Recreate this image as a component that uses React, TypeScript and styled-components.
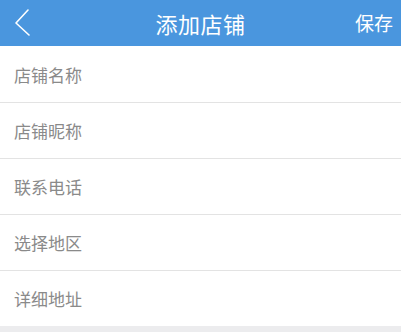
import styled, { createGlobalStyle } from "styled-components";

const GlobalStyle = createGlobalStyle`
  html, body {
    margin: 0;
    padding: 0;
    background: #ececee;
    font-family: "Noto Sans CJK SC", "Noto Sans", sans-serif;
  }
`;

const Page = styled.div`
  width: 401px;
  min-height: 332px;
  background: #ececee;
`;

const NavBar = styled.header`
  height: 46px;
  background: #4a96de;
  display: grid;
  grid-template-columns: 60px 1fr 60px;
  align-items: center;
  color: #fff;
`;

const BackButton = styled.button`
  border: none;
  background: none;
  padding: 0 0 0 14px;
  height: 46px;
  display: flex;
  align-items: center;
  cursor: pointer;
`;

const Title = styled.h1`
  margin: 0;
  text-align: center;
  font-size: 22px;
  font-weight: 400;
  letter-spacing: 0.5px;
  line-height: 46px;
`;

const SaveButton = styled.button`
  border: none;
  background: none;
  color: #fff;
  font-family: inherit;
  font-size: 19px;
  padding: 0 8px 0 0;
  text-align: right;
  line-height: 46px;
  cursor: pointer;
`;

const FieldList = styled.ul`
  list-style: none;
  margin: 0;
  padding: 0;
  background: #fff;
`;

const Field = styled.li`
  height: 55px;
  display: flex;
  align-items: center;
  padding-left: 14px;
  border-bottom: 1px solid #e3e3e3;
  font-size: 17px;
  color: #8a8a8a;

  &:first-child {
    height: 56px;
  }
  &:last-child {
    border-bottom: none;
  }
`;

const fields = ["店铺名称", "店铺昵称", "联系电话", "选择地区", "详细地址"];

function App() {
  return (
    <Page>
      <GlobalStyle />
      <NavBar>
        <BackButton aria-label="返回">
          <svg width="16" height="28" viewBox="0 0 16 28">
            <path
              d="M14 1 L2 14 L15 26"
              fill="none"
              stroke="#fff"
              strokeWidth="1.6"
              strokeLinecap="round"
              strokeLinejoin="round"
            />
          </svg>
        </BackButton>
        <Title>添加店铺</Title>
        <SaveButton>保存</SaveButton>
      </NavBar>
      <FieldList>
        {fields.map((label) => (
          <Field key={label}>{label}</Field>
        ))}
      </FieldList>
    </Page>
  );
}

export default App;
